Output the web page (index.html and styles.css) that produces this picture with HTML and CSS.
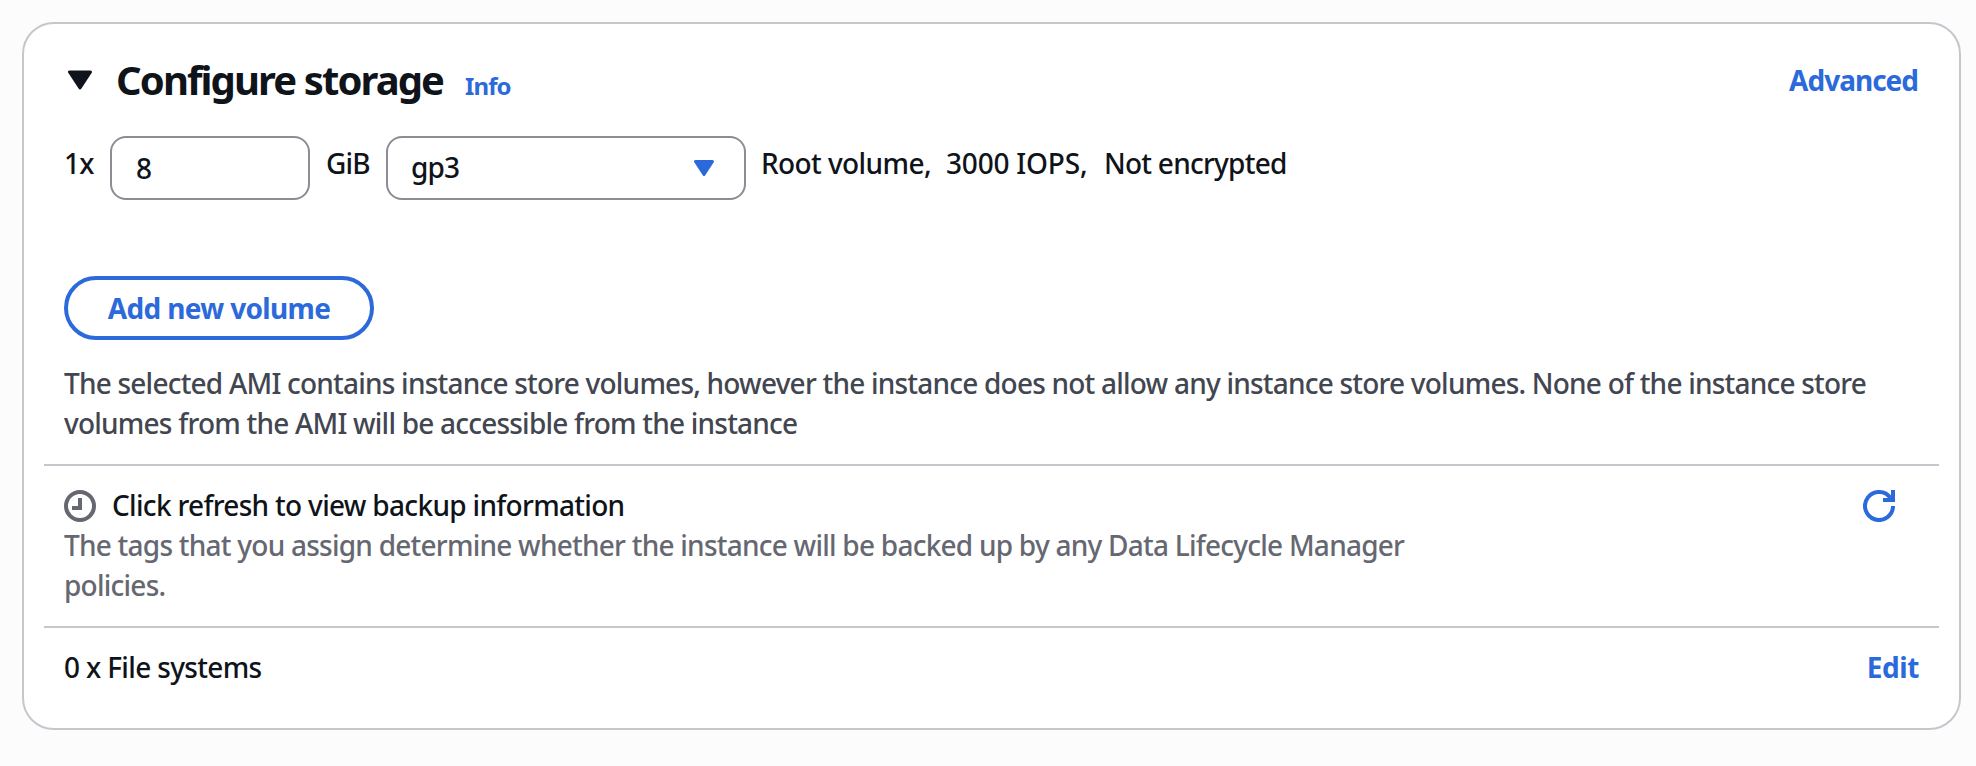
FILE: index.html
```html
<!DOCTYPE html>
<html lang="en">
<head>
<meta charset="utf-8">
<title>Configure storage</title>
<link rel="stylesheet" href="styles.css">
</head>
<body>
<section class="card">
  <header class="card-header">
    <svg class="caret" width="24" height="20" viewBox="0 0 24 20"><path d="M1.5 2h21L12 18z" fill="currentColor" stroke="currentColor" stroke-width="3" stroke-linejoin="round"/></svg>
    <h2 class="title">Configure storage</h2>
    <a class="link info">Info</a>
    <a class="link advanced">Advanced</a>
  </header>
  <div class="volume-row">
    <span class="count">1x</span>
    <div class="field size-field">8</div>
    <span class="unit">GiB</span>
    <div class="field select-field">
      <span class="select-value">gp3</span>
      <svg class="select-caret" width="20" height="16" viewBox="0 0 20 16"><path d="M1.5 1.5h17L10 14.5z" fill="currentColor" stroke="currentColor" stroke-width="3" stroke-linejoin="round"/></svg>
    </div>
    <span class="detail detail-volume">Root volume,</span>
    <span class="detail detail-iops">3000 IOPS,</span>
    <span class="detail detail-encryption">Not encrypted</span>
  </div>
  <button class="add-button" type="button">Add new volume</button>
  <p class="notice">The selected AMI contains instance store volumes, however the instance does not allow any instance store volumes. None of the instance store volumes from the AMI will be accessible from the instance</p>
  <div class="section backup">
    <div class="backup-text">
      <div class="backup-title">
        <svg class="clock" width="32" height="32" viewBox="0 0 32 32" fill="none" stroke="currentColor" stroke-width="4"><circle cx="16" cy="16" r="14"/><path d="M16 8v10H8"/></svg>
        <span>Click refresh to view backup information</span>
      </div>
      <p class="backup-note">The tags that you assign determine whether the instance will be backed up by any Data Lifecycle Manager policies.</p>
    </div>
    <svg class="refresh" width="32" height="32" viewBox="0 0 32 32" fill="none" stroke="currentColor" stroke-width="4"><path d="M30 16A14 14 0 1 1 27.5 8"/><path d="M30 0v10H20"/></svg>
  </div>
  <div class="section files">
    <span class="files-label">0 x File systems</span>
    <a class="link edit">Edit</a>
  </div>
</section>
</body>
</html>
```
FILE: styles.css
```css
* { box-sizing: border-box; }

body {
  margin: 0;
  padding: 22px 15px 36px 22px;
  background: #fcfcfd;
  color: #0f141a;
  font: 500 28px/40px "Noto Sans", "Open Sans", sans-serif;
}

h2, p { margin: 0; }

.card {
  height: 708px;
  padding: 31px 20px 0;
  border: 2px solid #c6c6cd;
  border-radius: 32px;
  background: #fff;
}

.card-header {
  display: flex;
  align-items: flex-start;
  height: 81px;
  padding: 0 21px 0 24px;
}

.caret { margin-top: 15px; }

.title {
  width: 328px;
  margin: 1px 0 0 24px;
  font-size: 40px;
  line-height: 48px;
  font-weight: 700;
  letter-spacing: -1.9px;
  white-space: nowrap;
}

.link {
  color: #2c6adb;
  font-weight: 700;
}

.info {
  margin: 13px 0 0 21px;
  font-size: 24px;
  line-height: 36px;
  letter-spacing: -0.9px;
}

.advanced {
  margin: 5px 0 0 auto;
  letter-spacing: -1px;
}

.volume-row {
  display: flex;
  align-items: flex-start;
  height: 140px;
  padding-left: 20px;
  white-space: nowrap;
}

.count { width: 46px; padding-top: 7px; letter-spacing: -0.8px; }

.field {
  height: 64px;
  border: 2px solid #8c8c94;
  border-radius: 16px;
  padding: 10px 22px 0 24px;
}

.size-field { width: 200px; }

.unit { width: 76px; padding: 7px 0 0 16px; letter-spacing: -0.8px; }

.select-field {
  display: flex;
  justify-content: space-between;
  width: 360px;
  padding: 9px 30px 0 23px;
}

.select-value { letter-spacing: -0.9px; }
.select-caret { margin-top: 13px; color: #2c6adb; }

.detail { padding-top: 7px; }
.detail-volume { width: 200px; padding-left: 15px; letter-spacing: -0.6px; }
.detail-iops { width: 158px; letter-spacing: -0.2px; }
.detail-encryption { letter-spacing: -0.75px; }

.add-button {
  display: block;
  width: 310px;
  height: 64px;
  margin-left: 20px;
  padding: 0 0 1px;
  border: 4px solid #2c6adb;
  border-radius: 32px;
  background: #fff;
  color: #2c6adb;
  font: 700 28px/40px "Noto Sans", "Open Sans", sans-serif;
  letter-spacing: -0.65px;
}

.notice {
  padding: 23px 20px 21px;
  color: #424650;
  letter-spacing: -0.785px;
}

.section {
  display: flex;
  justify-content: space-between;
  padding: 19px 20px 21px;
  border-top: 2px solid #c6c6cd;
}

.backup-text { width: 1400px; }

.backup-title {
  display: flex;
  gap: 16px;
  letter-spacing: -0.69px;
}

.clock { margin-top: 5px; color: #656871; }

.backup-note { color: #656871; letter-spacing: -0.76px; }

.refresh { margin: 5px 24px 0 0; color: #2c6adb; }

.files-label { letter-spacing: -0.65px; }
.edit { letter-spacing: -0.4px; }
```
